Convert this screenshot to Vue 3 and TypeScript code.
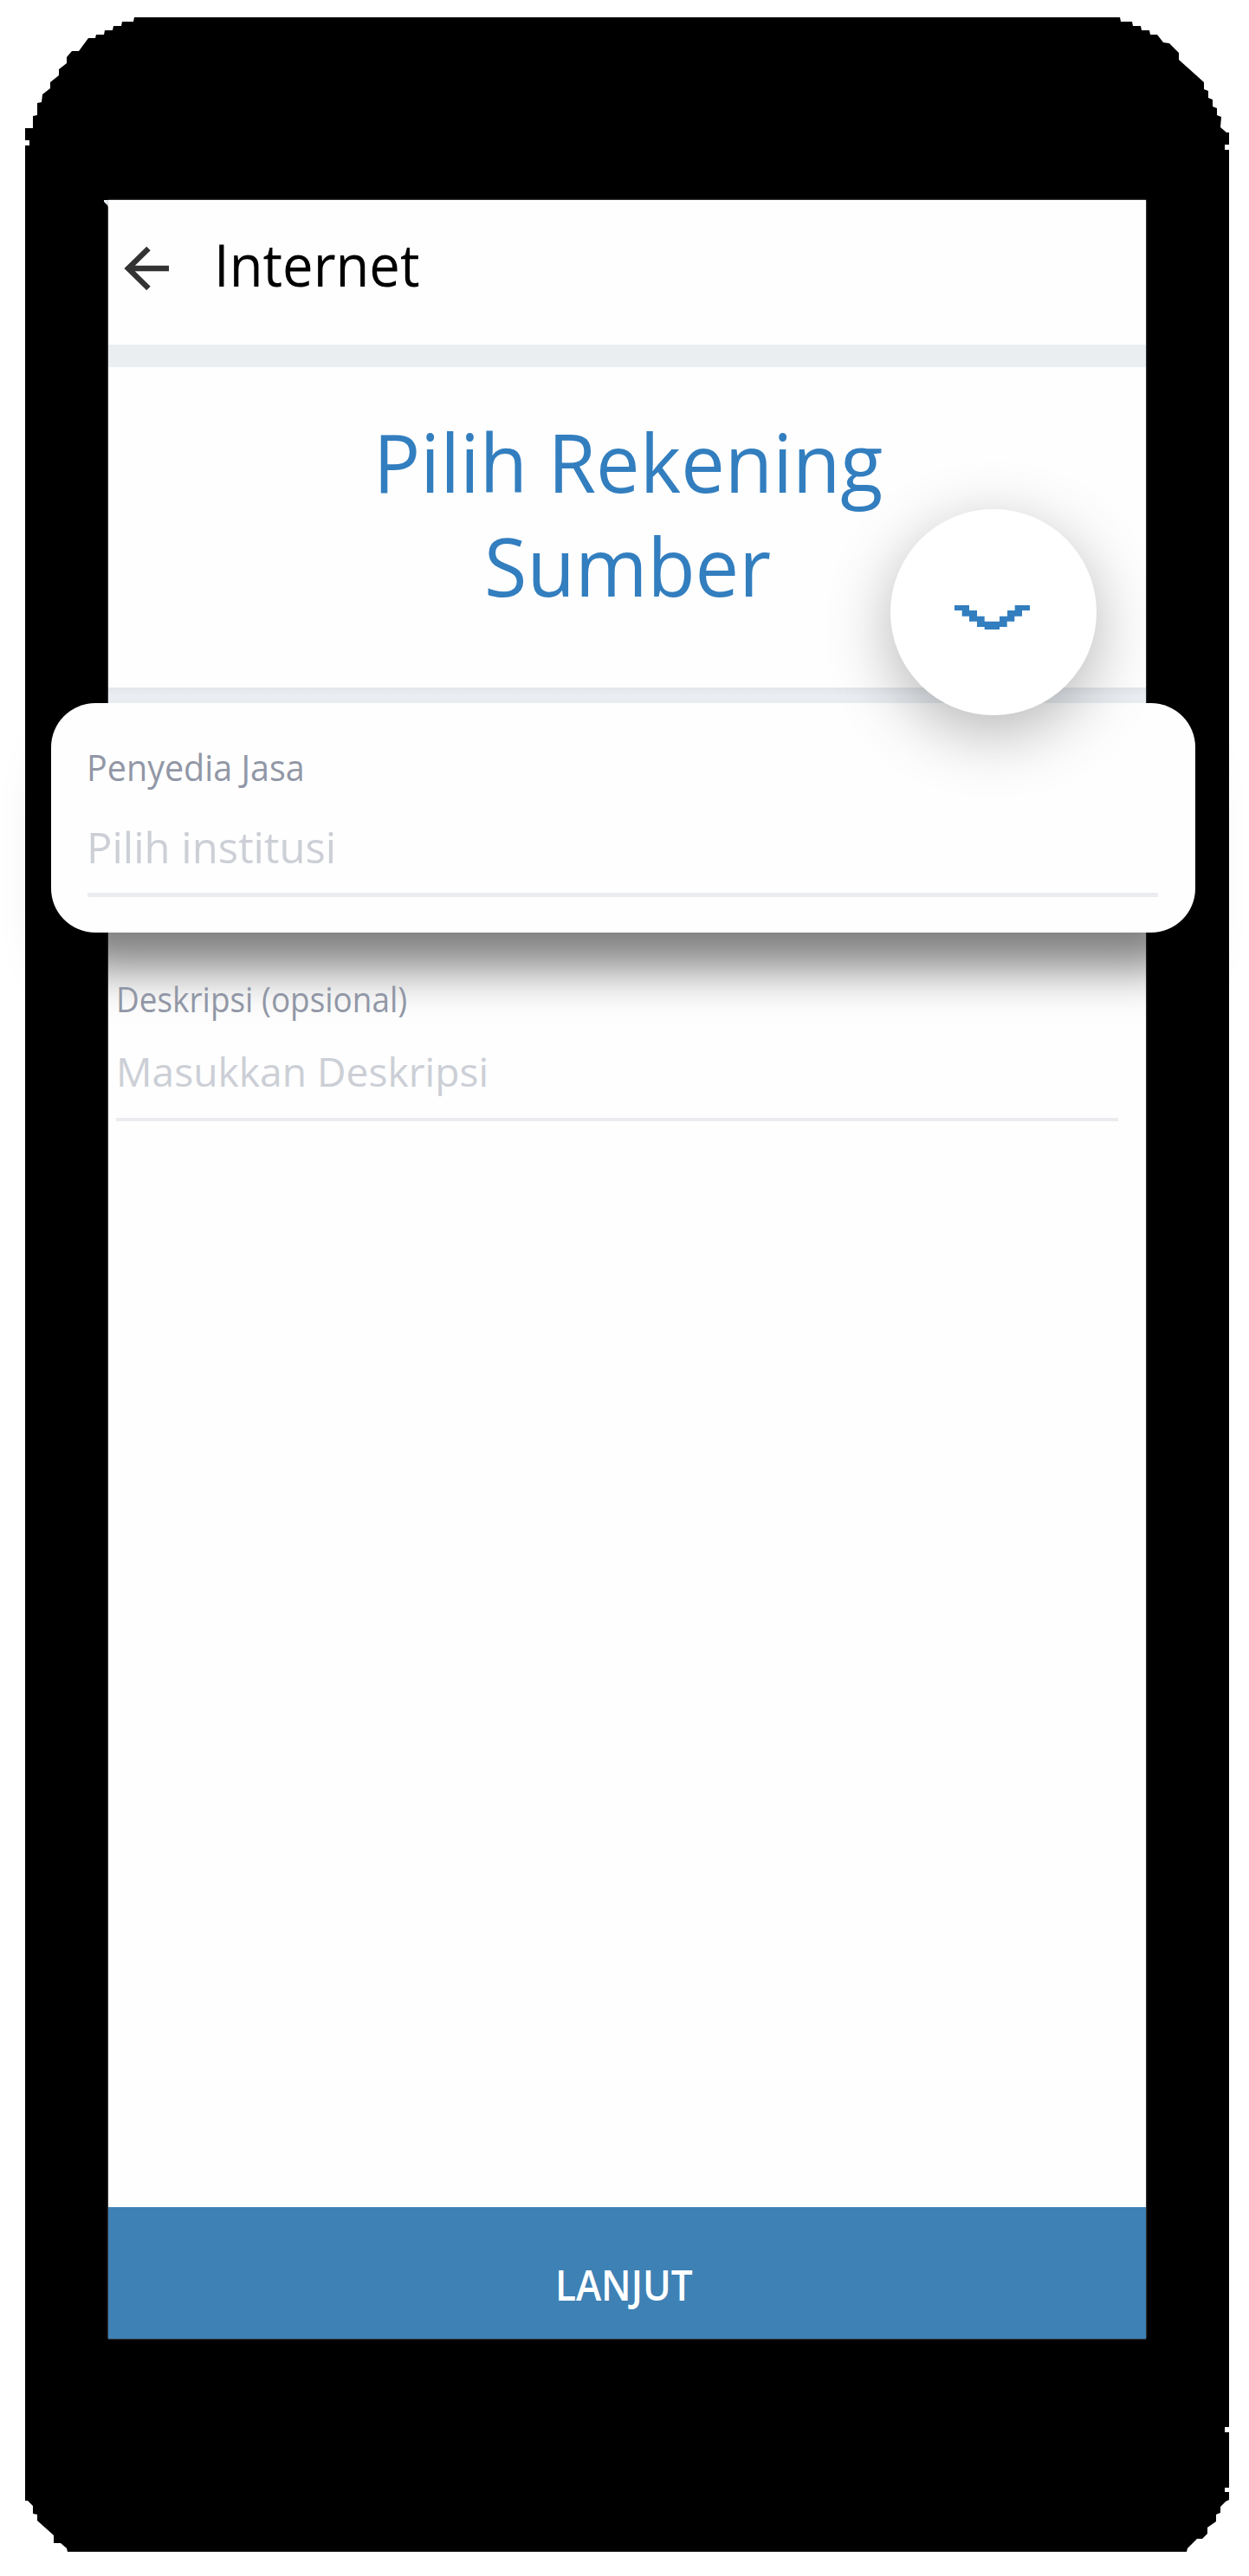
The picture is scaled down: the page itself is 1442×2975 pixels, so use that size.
<script setup lang="ts">
interface Field {
  label: string
  placeholder: string
}

const title = 'Internet'
const headline: string[] = ['Pilih Rekening', 'Sumber']
const provider: Field = { label: 'Penyedia Jasa', placeholder: 'Pilih institusi' }
const description: Field = { label: 'Deskripsi (opsional)', placeholder: 'Masukkan Deskripsi' }
const action = 'LANJUT'

const framePath =
  'M155 20H1293L1294 25H1307L1308 30H1317L1318 35H1327L1328 40H1336L1343 49L1350 50L1361 61V69L1390 95V103L1395 105V113L1400 115V123L1405 125V133L1410 135L1409 147L1416 153H1419V167H1414V173H1419' +
  'V2803H1414V2809H1419V2873H1414V2878H1419V2887L1415 2889L1409 2895V2902L1404 2904V2912L1394 2919V2926L1388 2932H1382L1371 2943L1370 2947' +
  'H78L77 2943L70 2937H62V2928L43 2911V2904L38 2903V2894L32 2888H29V168H34V162H29V148H38V134L43 133V119L48 118L49 109L58 102V95L68 87V80L77 73V66L83 59H91L102 44H110L111 40H120L121 35H130L131 30H140L141 25H154Z'
</script>

<template>
  <div class="stage">
    <svg class="frame" viewBox="0 0 1442 2975" aria-hidden="true">
      <path :d="framePath" fill="#000" />
      <path d="M120 231H130V244L126 241L124 237L120 233Z" fill="#eef3f7" />
    </svg>
    <main class="screen">
      <header class="topbar">
        <svg class="back" viewBox="0 0 54 54" fill="none" stroke="#333" stroke-width="6.4">
          <path d="M28.5 4L5 27L28.5 50M6 27H52" />
        </svg>
        <h1 class="title">{{ title }}</h1>
      </header>
      <div class="band"></div>
      <section class="hero">
        <div v-for="line in headline" :key="line" class="hero-line"><span>{{ line }}</span></div>
      </section>
      <div class="band band-low"></div>
      <section class="card">
        <div class="label"><span>{{ provider.label }}</span></div>
        <div class="value"><span>{{ provider.placeholder }}</span></div>
        <button class="fab" aria-label="Pilih">
          <svg viewBox="0 0 261 84" width="87" height="28">
            <path
              d="M0 0H51V18H78V38H104V56H156V38H183V18H209V0H261V18H234V38H208V56H182V75H156V84H104V75H78V56H51V38H26V18H0Z"
              fill="#327ebf"
            />
          </svg>
        </button>
      </section>
      <section class="desc">
        <div class="label"><span>{{ description.label }}</span></div>
        <div class="value"><span>{{ description.placeholder }}</span></div>
      </section>
      <button class="next"><span>{{ action }}</span></button>
    </main>
  </div>
</template>

<style>
body {
  background: #fff;
}
</style>

<style scoped>
.stage {
  position: relative;
  box-sizing: border-box;
  width: 1442px;
  height: 2975px;
  padding: 231px 119px 0 125px;
  overflow: hidden;
  font-family: 'Open Sans', 'Noto Sans', sans-serif;
}
.frame {
  position: absolute;
  inset: 0;
  width: 1442px;
  height: 2975px;
}
.screen {
  position: relative;
  display: flex;
  flex-direction: column;
  width: 1198px;
  height: 2470px;
  background: #fefefe;
  box-shadow: 0 0 2px #8e979d;
}
span {
  display: inline-block;
  white-space: nowrap;
  transform-origin: left center;
}
.topbar {
  display: flex;
  align-items: center;
  height: 167px;
  box-sizing: border-box;
  padding: 0 0 9px 18px;
}
.back {
  width: 54px;
  height: 54px;
}
.title {
  margin: 0 0 0 50px;
  padding-bottom: 11px;
  color: #000;
  font-size: 67px;
  font-weight: 400;
  line-height: 90px;
  transform: scaleX(0.945);
  transform-origin: left center;
}
.band {
  height: 26px;
  background: #eaeef1;
}
.band-low {
  height: 18px;
  background: linear-gradient(#e3e7ea, #eaeef2 50%);
}
.hero {
  box-sizing: border-box;
  height: 370px;
  padding-top: 49px;
  color: #327ebf;
  font-size: 93px;
}
.hero-line {
  display: flex;
  justify-content: center;
  height: 120px;
  line-height: 120px;
}
.hero-line span {
  transform: translateX(1px) scaleX(0.97);
  transform-origin: center;
}
.card {
  position: relative;
  box-sizing: border-box;
  flex: none;
  height: 265px;
  margin: 0 -57px 0 -66px;
  padding: 44px 43px 0 42px;
  border-radius: 51px;
  background: #fefefe;
  box-shadow: 0 51px 54px -10px rgba(0, 0, 0, 0.5);
}
.label {
  height: 60px;
  color: #9197a6;
  font-size: 42px;
  line-height: 60px;
}
.value {
  height: 115px;
  box-sizing: border-box;
  border-bottom: 5px solid #ebecef;
  color: #cccfd6;
}
.card .value {
  height: 120px;
  padding: 32px 0 0 0;
  font-size: 49px;
  line-height: 60px;
}
.card span {
  margin-left: -1px;
}
.card .label span {
  transform: scaleX(0.94);
}
.fab {
  position: absolute;
  top: -224px;
  left: 969px;
  display: flex;
  align-items: center;
  justify-content: center;
  width: 238px;
  height: 238px;
  padding: 12px 3px 0 0;
  border: 0;
  border-radius: 50%;
  background: #fff;
  box-shadow: 0 20px 75px rgba(0, 0, 0, 0.29);
}
.desc {
  position: relative;
  margin: 47px 32px 0 9px;
}
.desc .label {
  font-size: 40px;
}
.desc .label span {
  transform: scaleX(0.923);
}
.desc .value {
  height: 111px;
  padding-top: 24px;
  border-bottom-width: 4px;
  font-size: 45px;
  line-height: 60px;
}
.desc .value span {
  transform: scaleX(1.026);
}
.next {
  height: 152px;
  margin-top: auto;
  padding: 28px 0 0;
  border: 0;
  background: #3e81b5;
  color: #fff;
  font-family: inherit;
  font-size: 48px;
  font-weight: 600;
  line-height: 66px;
}
.next span {
  transform: translateX(-4px) scaleX(0.92);
  transform-origin: center;
}
</style>
